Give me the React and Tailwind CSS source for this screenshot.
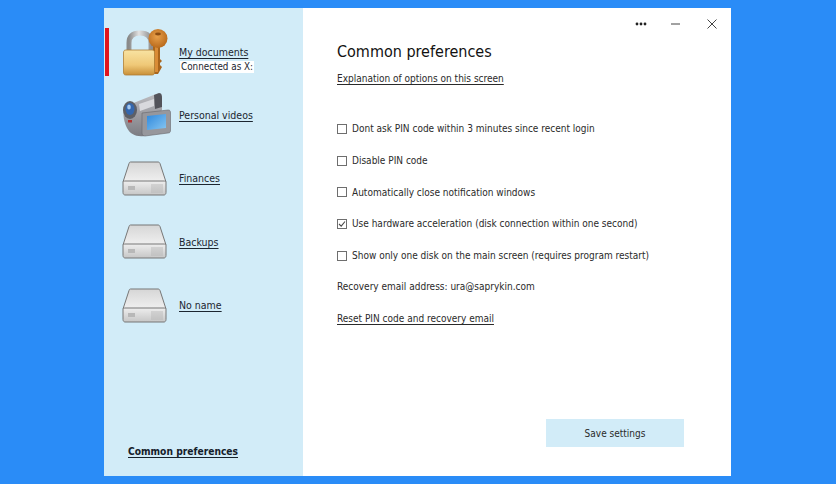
function Lock() {
  return (
    <svg width="48" height="48" viewBox="0 0 48 48">
      <defs>
        <linearGradient id="body" x1="0" y1="0" x2="0" y2="1">
          <stop offset="0" stopColor="#f8e3a2" />
          <stop offset="0.6" stopColor="#efc877" />
          <stop offset="1" stopColor="#c98f38" />
        </linearGradient>
        <linearGradient id="shackle" x1="0" y1="0" x2="1" y2="0">
          <stop offset="0" stopColor="#8a8a8a" />
          <stop offset="0.45" stopColor="#e2e2e2" />
          <stop offset="1" stopColor="#8f8f8f" />
        </linearGradient>
        <radialGradient id="key" cx="0.45" cy="0.4" r="0.6">
          <stop offset="0" stopColor="#e8a04a" />
          <stop offset="1" stopColor="#b96a1c" />
        </radialGradient>
      </defs>
      <path d="M7 24V15C7 7 12 5 18 5C24 5 29 7 29 15V24" fill="none" stroke="url(#shackle)" strokeWidth="5" />
      <path d="M31 18H38V31L40 33L38 35V37L40 39L36 46H31Z" fill="#a9651c" />
      <path d="M33 18H36V44H33Z" fill="#d98c36" />
      <circle cx="36" cy="10.500" r="9.500" fill="url(#key)" />
      <ellipse cx="36" cy="6" rx="3" ry="1.400" fill="#8c4d12" />
      <path d="M4 22H30C32 22 32.500 23 32.500 25V44C32.500 46 32 47 30 47H4C2 47 1.500 46 1.500 44V25C1.500 23 2 22 4 22Z" fill="url(#body)" stroke="#b07f35" strokeWidth="0.8" />
    </svg>
  );
}

function Camera() {
  return (
    <svg width="50" height="46" viewBox="0 0 50 46">
      <defs>
        <linearGradient id="cam" x1="0" y1="0" x2="0" y2="1">
          <stop offset="0" stopColor="#bcbcc0" />
          <stop offset="1" stopColor="#7c7c82" />
        </linearGradient>
        <linearGradient id="scr" x1="0" y1="0" x2="1" y2="1">
          <stop offset="0" stopColor="#2f88dc" />
          <stop offset="1" stopColor="#86c6f2" />
        </linearGradient>
      </defs>
      <path d="M4 14L34 2C38 1 40 3 40 7V18L22 44C14 45 8 42 5 36C1 28 0 18 4 14Z" fill="url(#cam)" />
      <path d="M32 3L37 1C40 1 40 4 40 7V15L33 17Z" fill="#53535a" />
      <path d="M17 12L32 7V14L18 19Z" fill="#d9d9dd" />
      <ellipse cx="8" cy="18" rx="7" ry="9" fill="#5c5f66" />
      <ellipse cx="8" cy="17" rx="4.500" ry="6" fill="#3467ae" />
      <ellipse cx="7" cy="15" rx="1.800" ry="2.500" fill="#a4c8ef" />
      <rect x="6" y="28" width="4" height="2.500" fill="#b03030" />
      <path d="M20 21L46 18C48 18 48.500 19 48.500 21V38C48.500 40 48 41 46 41L23 44C21 44 20 43 20 41Z" fill="#97979c" stroke="#66666b" strokeWidth="0.6" />
      <path d="M25 24L44 22V36L25 38Z" fill="url(#scr)" />
    </svg>
  );
}

function Disk({ id }) {
  return (
    <svg width="45" height="35" viewBox="0 0 45 35">
      <defs>
        <linearGradient id={`top${id}`} x1="0" y1="0" x2="0" y2="1">
          <stop offset="0" stopColor="#d6d6d6" />
          <stop offset="1" stopColor="#f0f0f0" />
        </linearGradient>
        <linearGradient id={`front${id}`} x1="0" y1="0" x2="0" y2="1">
          <stop offset="0" stopColor="#eeeeee" />
          <stop offset="1" stopColor="#c6c6c6" />
        </linearGradient>
      </defs>
      <path d="M8.500 1H36C37 1 37.500 1.500 38 2.500L44 21H1L7 2.500C7.300 1.500 7.700 1 8.500 1Z" fill={`url(#top${id})`} stroke="#777" strokeWidth="1" />
      <path d="M1 21C1 20.500 2 20 3 20H42C43 20 44 20.500 44 21V31.500C44 33 43 34 42 34H3C2 34 1 33 1 31.500Z" fill={`url(#front${id})`} stroke="#777" strokeWidth="1" />
      <rect x="6" y="25" width="7" height="4" fill="#b8b8b8" />
      <path d="M30 23V32M32 23V32M34 23V32M36 23V32M38 23V32M40 23V32" stroke="#b4b4b4" strokeWidth="0.8" />
    </svg>
  );
}

function Row({ icon, label, sub, active }) {
  return (
    <div className="relative flex h-[63.4px] items-center">
      {active && <div className="absolute left-[1px] top-[8px] h-[48px] w-[4px] bg-[#e0141e]" />}
      <div className="ml-[18px] flex w-[57px] shrink-0 items-center">{icon}</div>
      <div className={sub ? "flex flex-col items-start pt-[15px]" : "flex flex-col items-start"}>
        <span className="text-[10.500px] leading-[14px] underline underline-offset-2 text-[#1c2630]">{label}</span>
        {sub && <span className="mt-[2px] ml-[1px] bg-white px-[1px] text-[9.800px] leading-[12px] text-[#1c2630]">{sub}</span>}
      </div>
    </div>
  );
}

function Check({ label, checked }) {
  return (
    <label className="flex h-[31.7px] items-center gap-[5px]">
      <span className="flex h-[10px] w-[10px] shrink-0 items-center justify-center border border-[#6e6e6e] bg-white">
        {checked && (
          <svg width="8" height="8" viewBox="0 0 8 8">
            <path d="M1 4L3.200 6.200L7 1.500" fill="none" stroke="#4a4a4a" strokeWidth="1.100" />
          </svg>
        )}
      </span>
      <span>{label}</span>
    </label>
  );
}

export default function App() {
  return (
    <div className="flex h-[484px] w-[836px] items-start justify-center bg-[#2a8cf7] pt-[8px] font-['DejaVu_Sans_Condensed','DejaVu_Sans',sans-serif] [font-stretch:condensed] text-[#2a2a2a]">
      <div className="ml-[-1px] flex h-[468px] w-[627px] bg-white">
        <aside className="flex w-[199px] shrink-0 flex-col justify-between bg-[#d2ecf8] pt-[12px] pb-[17px]">
          <div>
            <Row icon={<Lock />} label="My documents" sub="Connected as X:" active />
            <Row icon={<Camera />} label="Personal videos" />
            <Row icon={<Disk id="a" />} label="Finances" />
            <Row icon={<Disk id="b" />} label="Backups" />
            <Row icon={<Disk id="c" />} label="No name" />
          </div>
          <span className="ml-[24px] text-[10.200px] font-bold leading-[14px] text-[#15202a] underline underline-offset-2">Common preferences</span>
        </aside>
        <main className="flex flex-1 flex-col">
          <div className="flex h-[30px] items-center justify-end pr-[14px] pt-[1px] text-[#333]">
            <svg width="12" height="4" viewBox="0 0 12 4" className="mr-[24px]">
              <circle cx="2" cy="2" r="1.400" fill="#222" />
              <circle cx="6" cy="2" r="1.400" fill="#222" />
              <circle cx="10" cy="2" r="1.400" fill="#222" />
            </svg>
            <svg width="9" height="2" viewBox="0 0 9 2" className="mr-[27px]">
              <path d="M0 1H9" stroke="#444" strokeWidth="1" />
            </svg>
            <svg width="10" height="10" viewBox="0 0 10 10">
              <path d="M0.500 0.500L9.500 9.500M9.500 0.500L0.500 9.500" stroke="#444" strokeWidth="1" />
            </svg>
          </div>
          <div className="flex flex-1 flex-col pl-[34px] pr-[47px] pb-[29px] text-[10px]">
            <h1 className="mt-[3px] text-[16px] font-normal leading-[22px] text-[#111]">Common preferences</h1>
            <a className="mt-[8px] leading-[16px] underline underline-offset-2">Explanation of options on this screen</a>
            <div className="mt-[26px] flex flex-col">
              <Check label="Dont ask PIN code within 3 minutes since recent login" />
              <Check label="Disable PIN code" />
              <Check label="Automatically close notification windows" />
              <Check label="Use hardware acceleration (disk connection within one second)" checked />
              <Check label="Show only one disk on the main screen (requires program restart)" />
            </div>
            <p className="mt-[8px] leading-[16px]">Recovery email address: ura@saprykin.com</p>
            <a className="mt-[16px] leading-[16px] underline underline-offset-2">Reset PIN code and recovery email</a>
            <button className="mt-auto h-[28px] w-[138px] self-end bg-[#d2ecf8] text-[10px] text-[#2a2a2a]">Save settings</button>
          </div>
        </main>
      </div>
    </div>
  );
}
